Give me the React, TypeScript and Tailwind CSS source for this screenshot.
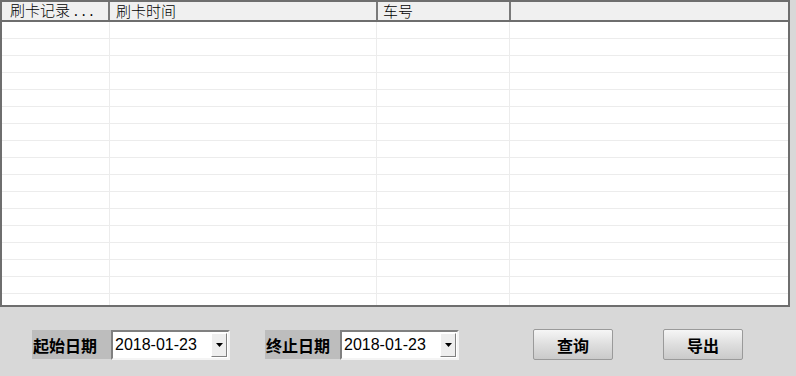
const columns = [
  { label: '刷卡记录', dots: true, width: 'w-[108px]', pad: 'pl-[8px]' },
  { label: '刷卡时间', dots: false, width: 'w-[268px]', pad: 'pl-[6px]' },
  { label: '车号', dots: false, width: 'w-[133px]', pad: 'pl-[5px]' },
  { label: '', dots: false, width: 'flex-1', pad: '' }
];

const rows = Array.from({ length: 17 });

function DateBox({ label, value, labelWidth }: { label: string; value: string; labelWidth: string }) {
  return (
    <div className="flex items-center">
      <div className={`flex h-[29px] ${labelWidth} items-center bg-[#bdbdbd] pl-[1px] text-[16px] font-bold text-black`}>
        {label}
      </div>
      <div className="flex h-[30px] w-[119px] items-center border-2 border-t-[#808080] border-l-[#808080] border-b-[#f4f4f4] border-r-[#f4f4f4] bg-white">
        <span className="flex-1 pl-[2px] font-['Liberation_Sans',sans-serif] text-[16px] text-black">{value}</span>
        <div className="mr-[1px] flex h-[24px] w-[16px] items-center justify-center border border-t-white border-l-white border-b-[#808080] border-r-[#808080] bg-[#eeeeee]">
          <svg width="7" height="4" viewBox="0 0 7 4">
            <path d="M0 0h7L3.5 4z" fill="#000" />
          </svg>
        </div>
      </div>
    </div>
  );
}

function ActionButton({ label }: { label: string }) {
  return (
    <button className="flex h-[31px] w-[80px] items-center justify-center rounded-[2px] border border-[#9a9a9a] bg-gradient-to-b from-[#f6f6f6] via-[#dedede] to-[#cacaca] text-[16px] font-bold text-black">
      {label}
    </button>
  );
}

export default function App() {
  return (
    <div className="h-[376px] w-[796px] overflow-hidden bg-[#d8d8d8] font-['Noto_Sans_CJK_SC',sans-serif]">
      <div className="flex h-[307px] w-[790px] flex-col border-2 border-[#6e6e6e] bg-white">
        <div className="flex h-[20px] border-b-2 border-[#6e6e6e] bg-[#f0f0f0]">
          {columns.map((col, i) => (
            <div
              key={i}
              className={`${col.width} ${col.pad} flex items-center whitespace-nowrap text-[15px] font-light leading-[18px] text-black ${
                i < columns.length - 1 ? 'border-r-2 border-r-[#7a7a7a]' : ''
              }`}
            >
              <span>
                {col.label}
                {col.dots && (
                  <span className="ml-[2px] font-['Liberation_Mono',monospace] text-[13px]">...</span>
                )}
              </span>
            </div>
          ))}
        </div>
        <div className="flex-1 overflow-hidden">
          {rows.map((_, r) => (
            <div key={r} className="flex h-[17px] border-b border-[#ececec]">
              <div className="w-[108px] border-r border-[#ececec]" />
              <div className="w-[267px] border-r border-[#ececec]" />
              <div className="w-[133px] border-r border-[#ececec]" />
              <div className="flex-1" />
            </div>
          ))}
        </div>
      </div>
      <div className="flex items-center pl-[32px] pt-[22px]">
        <DateBox label="起始日期" value="2018-01-23" labelWidth="w-[79px]" />
        <div className="ml-[35px]">
          <DateBox label="终止日期" value="2018-01-23" labelWidth="w-[75px]" />
        </div>
        <div className="ml-[74px]">
          <ActionButton label="查询" />
        </div>
        <div className="ml-[50px]">
          <ActionButton label="导出" />
        </div>
      </div>
    </div>
  );
}
